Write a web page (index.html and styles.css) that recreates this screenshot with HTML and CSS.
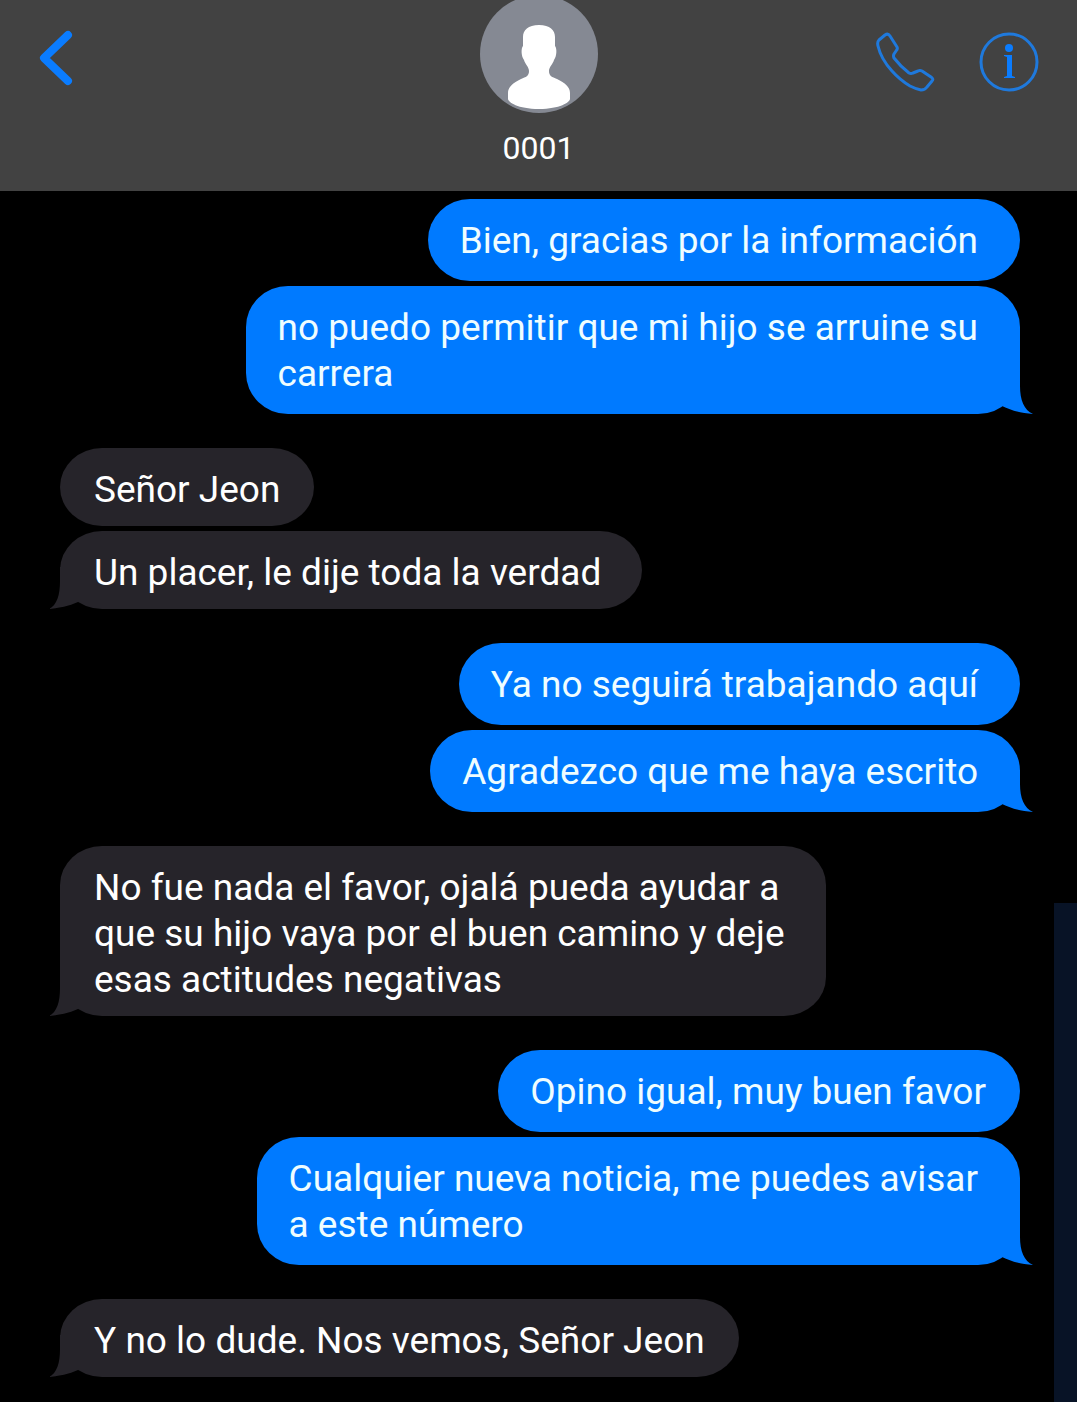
FILE: index.html
```html
<!DOCTYPE html>
<html lang="es">
<head>
    <meta charset="UTF-8">
    <meta name="viewport" content="width=device-width, initial-scale=1.0">
    <title>0001</title>
    <link rel="stylesheet" href="styles.css">
</head>
<body>
    <header class="topbar">
        <button class="icon-button back" type="button" aria-label="Atrás">
            <svg width="38" height="58" viewBox="0 0 38 58">
                <path d="M30 6 L6 29 L30 52" fill="none" stroke="#0a7cff" stroke-width="8" stroke-linecap="round" stroke-linejoin="round"/>
            </svg>
        </button>
        <div class="contact">
            <svg class="avatar" width="118" height="118" viewBox="0 0 118 118" aria-hidden="true">
                <circle cx="59" cy="59" r="59" fill="#858993"/>
                <path d="M59 30 C48 30 43 35 43 42 V51 C41 53 41 61 44 65 C45 69 49 72 49 76 C49 81 46 82 41 84 C33 88 28 92 28 98 V104 C28 107 38 114 59 114 C80 114 90 107 90 104 V98 C90 92 85 88 77 84 C72 82 69 81 69 76 C69 72 73 69 74 65 C77 61 77 53 75 51 V42 C75 35 70 30 59 30 Z" fill="#fff"/>
            </svg>
            <h1 class="name">0001</h1>
        </div>
        <div class="actions">
            <button class="icon-button" type="button" aria-label="Llamar">
                <svg width="60" height="60" viewBox="0 0 60 60">
                    <path d="M4 8 L10 3 Q13 1 15 4 L22 15 Q23 17 21 19 L19 22 Q18 24 19 26 Q26 35 34 41 Q36 42 38 41 L43 39 Q45 38 47 39 L56 45 Q59 47 57 49 L52 55 Q50 58 46 58 Q41 57 35 54 Q25 48 17 39 Q6 27 3 14 Q2 10 4 8 Z" fill="none" stroke="#1f79dc" stroke-width="3" stroke-linejoin="round"/>
                </svg>
            </button>
            <button class="icon-button" type="button" aria-label="Información">
                <svg width="60" height="60" viewBox="0 0 60 60">
                    <circle cx="30" cy="30" r="28" fill="none" stroke="#1f79dc" stroke-width="3"/>
                    <circle cx="30" cy="16" r="4" fill="#0a7cff"/>
                    <path d="M25 23 H33 V44 L36 45 V46 H25 V45 L28 44 V25 L25 24 Z" fill="#0a7cff"/>
                </svg>
            </button>
        </div>
    </header>

    <main class="chat">
        <div class="group sent">
            <p class="bubble">Bien, gracias por la información</p>
            <p class="bubble tail">no puedo permitir que mi hijo se arruine su<br>carrera</p>
        </div>
        <div class="group received">
            <p class="bubble tight">Señor Jeon</p>
            <p class="bubble tail">Un placer, le dije toda la verdad</p>
        </div>
        <div class="group sent">
            <p class="bubble">Ya no seguirá trabajando aquí</p>
            <p class="bubble tail">Agradezco que me haya escrito</p>
        </div>
        <div class="group received">
            <p class="bubble tail">No fue nada el favor, ojalá pueda ayudar a<br>que su hijo vaya por el buen camino y deje<br>esas actitudes negativas</p>
        </div>
        <div class="group sent">
            <p class="bubble tight">Opino igual, muy buen favor</p>
            <p class="bubble tail">Cualquier nueva noticia, me puedes avisar<br>a este número</p>
        </div>
        <div class="group received">
            <p class="bubble tail tight">Y no lo dude. Nos vemos, Señor Jeon</p>
        </div>
    </main>
</body>
</html>
```
FILE: styles.css
```css
* {
    box-sizing: border-box;
}
body {
    margin: 0;
    min-height: 100vh;
    display: flex;
    flex-direction: column;
    background-color: #000;
    font-family: Roboto, "Liberation Sans", sans-serif;
}

/* Header */
.topbar {
    display: grid;
    grid-template-columns: 1fr auto 1fr;
    align-items: start;
    padding: 0 38px 19px;
    background-color: #424242;
}
.icon-button {
    display: block;
    padding: 0;
    border: none;
    background: none;
    cursor: pointer;
}
.icon-button svg {
    display: block;
}
.back {
    margin-top: 29px;
    justify-self: start;
}
.contact {
    display: flex;
    flex-direction: column;
    align-items: center;
    gap: 11px;
}
.avatar {
    display: block;
    margin-top: -5px;
}
.name {
    margin: 0;
    color: #fff;
    font-size: 32px;
    font-weight: 400;
    line-height: 48px;
}
.actions {
    display: flex;
    justify-content: flex-end;
    gap: 44px;
    margin-top: 32px;
}

/* Messages */
.chat {
    flex: 1;
    display: flex;
    flex-direction: column;
    gap: 34px;
    padding: 8px 57px 25px 60px;
    background: linear-gradient(#081326, #081326) right bottom / 23px 499px no-repeat;
}
.group {
    display: flex;
    flex-direction: column;
    gap: 5px;
}
.sent {
    align-items: flex-end;
}
.received {
    align-items: flex-start;
}
.bubble {
    position: relative;
    margin: 0;
    font-size: 37px;
    line-height: 46px;
}
.sent .bubble {
    padding: 19px 42px 17px 32px;
    border-radius: 42px / 41px;
    background-color: #007aff;
    color: #effdff;
}
.received .bubble {
    padding: 19px 41px 13px 34px;
    border-radius: 42px / 39px;
    background-color: #26242a;
    color: #fff;
}
.group .tight {
    padding-right: 34px;
}

/* Little tail in the bottom corner of the last bubble */
.tail::after {
    content: "";
    position: absolute;
    bottom: 0;
    width: 33px;
    height: 42px;
    background-color: inherit;
}
.sent .tail::after {
    right: -13px;
    clip-path: path("M20 0 V14 C20 28 24 38 33 42 C22 41 12 39 2 34 V0 Z");
}
.received .tail::after {
    left: -11px;
    clip-path: path("M11 0 V14 C11 28 8 38 0 42 C10 41 20 39 29 35 V0 Z");
}
```
